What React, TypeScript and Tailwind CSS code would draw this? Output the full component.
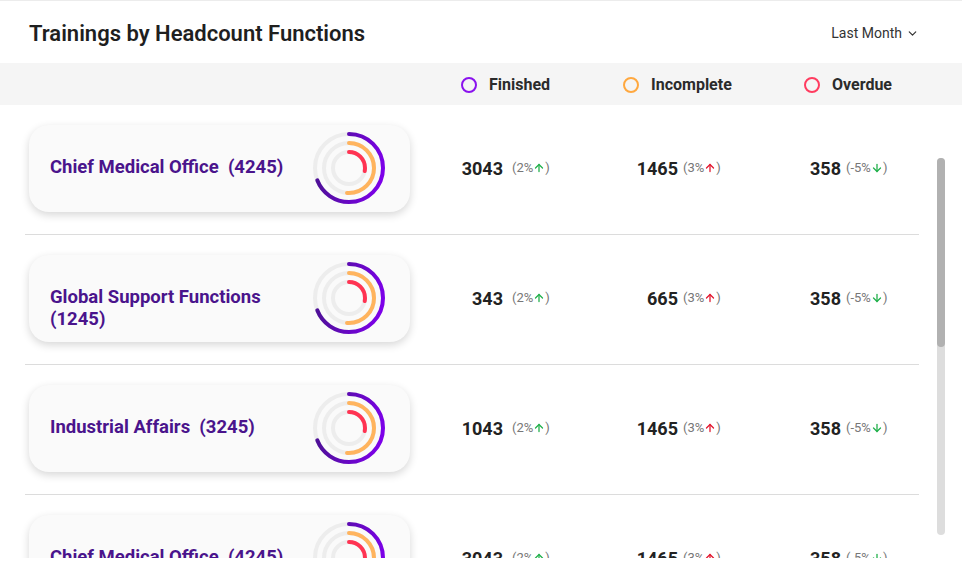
import { ArrowDown, ArrowUp, ChevronDown } from "lucide-react";

type Delta = { value: string; up: boolean; good: boolean };
type Stat = { count: number; delta: Delta };
type Row = { name: string; stats: Stat[] };

const rows: Row[] = [
  {
    name: "Chief Medical Office\u00a0\u00a0(4245)",
    stats: [
      { count: 3043, delta: { value: "2%", up: true, good: true } },
      { count: 1465, delta: { value: "3%", up: true, good: false } },
      { count: 358, delta: { value: "-5%", up: false, good: true } },
    ],
  },
  {
    name: "Global Support Functions (1245)",
    stats: [
      { count: 343, delta: { value: "2%", up: true, good: true } },
      { count: 665, delta: { value: "3%", up: true, good: false } },
      { count: 358, delta: { value: "-5%", up: false, good: true } },
    ],
  },
  {
    name: "Industrial Affairs\u00a0\u00a0(3245)",
    stats: [
      { count: 1043, delta: { value: "2%", up: true, good: true } },
      { count: 1465, delta: { value: "3%", up: true, good: false } },
      { count: 358, delta: { value: "-5%", up: false, good: true } },
    ],
  },
  {
    name: "Chief Medical Office\u00a0\u00a0(4245)",
    stats: [
      { count: 3043, delta: { value: "2%", up: true, good: true } },
      { count: 1465, delta: { value: "3%", up: true, good: false } },
      { count: 358, delta: { value: "-5%", up: false, good: true } },
    ],
  },
];

// column geometry: number box width and gap before the delta
const cols = [
  { cell: "w-[213px]", num: "w-[93px]", gap: "ml-[9px]" },
  { cell: "w-[181px]", num: "w-[55px]", gap: "ml-[5px]" },
  { cell: "w-[90px]", num: "w-[37px]", gap: "ml-[5px]" },
];

function Arc({ r, pct, stroke }: { r: number; pct: number; stroke: string }) {
  const c = 2 * Math.PI * r;
  return (
    <>
      <circle cx="39" cy="39" r={r} fill="none" stroke="#ededed" strokeWidth="4" />
      <circle
        cx="39"
        cy="39"
        r={r}
        fill="none"
        stroke={stroke}
        strokeWidth="4"
        strokeLinecap="round"
        strokeDasharray={`${c * pct} ${c}`}
        transform="rotate(-90 39 39)"
      />
    </>
  );
}

function Rings({ id }: { id: string }) {
  return (
    <svg width="78" height="78" viewBox="0 0 78 78">
      <defs>
        <linearGradient id={id} x1="0.6" y1="0" x2="0.4" y2="1">
          <stop offset="0" stopColor="#4a1290" />
          <stop offset="1" stopColor="#7d00ea" />
        </linearGradient>
      </defs>
      <Arc r={34} pct={0.69} stroke={`url(#${id})`} />
      <Arc r={25} pct={0.51} stroke="#ffb45e" />
      <Arc r={16} pct={0.28} stroke="#ff3352" />
    </svg>
  );
}

function DeltaText({ delta }: { delta: Delta }) {
  const color = delta.good ? "text-[#22b14c]" : "text-[#e3172f]";
  return (
    <span className="flex items-center text-[13px] text-[#777]">
      ({delta.value}
      {delta.up ? (
        <ArrowUp size={12} strokeWidth={2.6} className={color} />
      ) : (
        <ArrowDown size={12} strokeWidth={2.6} className={color} />
      )}
      )
    </span>
  );
}

function LegendItem({ label, ring, width }: { label: string; ring: string; width: string }) {
  return (
    <div className={`flex items-center gap-[12px] ${width}`}>
      <span className={`h-[16px] w-[16px] rounded-full border-2 ${ring}`} />
      <span className="text-[16px] font-bold text-[#2b2b2b]">{label}</span>
    </div>
  );
}

export default function App() {
  return (
    <div
      className="h-[582px] w-[962px] overflow-hidden border-t border-[#ececec] bg-white"
      style={{ fontFamily: "Roboto, 'Noto Sans', sans-serif" }}
    >
      <div className="flex h-[62px] items-center justify-between pl-[29px] pr-[43px] pt-[3px]">
        <h1 className="text-[22px] font-semibold text-[#1f1f1f]">Trainings by Headcount Functions</h1>
        <button className="flex items-center gap-[4px] text-[14px] text-[#333]">
          Last Month
          <ChevronDown size={13} strokeWidth={2.2} />
        </button>
      </div>

      <div className="flex h-[42px] items-center bg-[#f5f5f5] pl-[461px] pt-[2px]">
        <LegendItem label="Finished" ring="border-[#8a12ee]" width="w-[162px]" />
        <LegendItem label="Incomplete" ring="border-[#ffa83f]" width="w-[181px]" />
        <LegendItem label="Overdue" ring="border-[#ff3c60]" width="w-[120px]" />
      </div>

      <div className="flex h-[453px]">
        <div className="w-[919px] overflow-hidden pl-[25px]">
          {rows.map((row, i) => (
            <div key={i} className="h-[130px] border-b border-[#dcdcdc] pt-[19px]">
              <div className="flex h-[87px] items-center pt-[1px]">
                <div className="ml-[4px] flex h-[87px] w-[381px] shrink-0 items-center justify-between rounded-[20px] bg-[#fafafa] pl-[21px] pr-[22px] shadow-[0_3px_8px_rgba(0,0,0,0.16)]">
                  <div className="mb-[2px] h-[22px] w-[240px] text-[18.5px] font-bold leading-[22px] text-[#4a148c]">
                    {row.name}
                  </div>
                  <Rings id={`grad-${i}`} />
                </div>
                {row.stats.map((s, j) => (
                  <div key={j} className={`flex items-center ${cols[j].cell}`}>
                    <span className={`text-right text-[18px] font-bold text-[#222] ${cols[j].num}`}>
                      {s.count}
                    </span>
                    <span className={cols[j].gap}>
                      <DeltaText delta={s.delta} />
                    </span>
                  </div>
                ))}
              </div>
            </div>
          ))}
        </div>
        <div className="ml-[18px] pt-[53px]">
          <div className="h-[377px] w-[8px] rounded-full bg-[#dddddd]">
            <div className="h-[189px] w-[8px] rounded-full bg-[#b1b1b1]" />
          </div>
        </div>
      </div>
    </div>
  );
}
